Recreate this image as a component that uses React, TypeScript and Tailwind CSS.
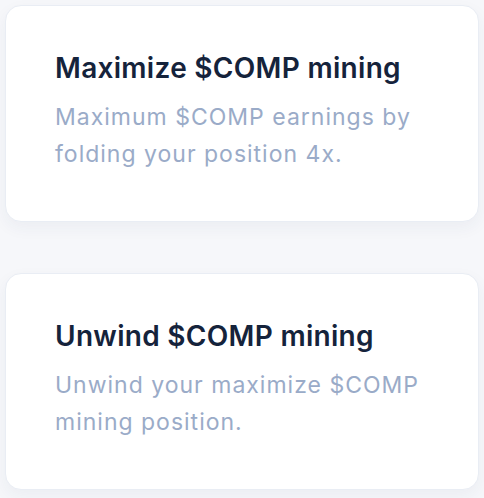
import React from "react";

const actions = [
  {
    title: "Maximize $COMP mining",
    description: "Maximum $COMP earnings by folding your position 4x.",
  },
  {
    title: "Unwind $COMP mining",
    description: "Unwind your maximize $COMP mining position.",
  },
];

const App: React.FC = () => {
  return (
    <div
      className="min-h-[498px] w-[484px] bg-[#f6f7fa] px-[5px] pt-[5px] flex flex-col gap-[51px]"
      style={{ fontFamily: "Inter, 'Noto Sans', sans-serif" }}
    >
      {actions.map((a) => (
        <div
          key={a.title}
          className="h-[217px] rounded-[16px] border border-[#e9edf4] bg-white pl-[49px] pr-[36px] pt-[44px] shadow-[0_6px_16px_rgba(30,50,90,0.05)]"
        >
          <h2 className="text-[28px] font-semibold leading-[36px] tracking-[0.3px] text-[#15233b]">{a.title}</h2>
          <p className="mt-[13px] text-[23px] leading-[37px] tracking-[1px] text-[#9aabc8]">
            {a.description}
          </p>
        </div>
      ))}
    </div>
  );
};

export default App;
